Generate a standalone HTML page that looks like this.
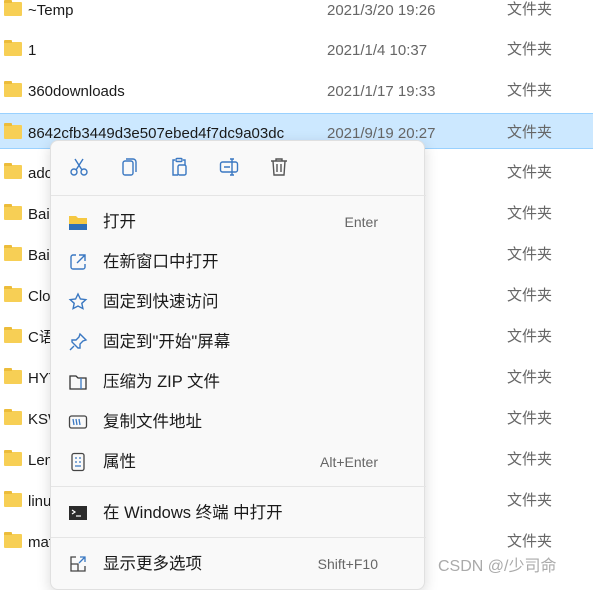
<!DOCTYPE html>
<html><head><meta charset="utf-8"><style>
*{margin:0;padding:0;box-sizing:border-box}
body{width:593px;height:584px;overflow:hidden;background:#fff;position:relative;font-family:"Liberation Sans","Noto Sans CJK SC",sans-serif;color:#1a1a1a;line-height:20px}
.r{position:absolute;left:0;width:593px;height:36px}
.r .f{position:absolute;left:4px;top:11px;width:18px;height:14px;background:#f7cf55;border-radius:1px}
.r .f:before{content:"";position:absolute;left:0;top:-2px;width:8px;height:3px;background:#ecbc3a;border-radius:1px 1px 0 0}
.r .n{position:absolute;left:28px;top:10px;font-size:15px;line-height:20px}
.r .d{position:absolute;left:327px;top:10px;font-size:15px;color:#666;line-height:20px}
.r .t{position:absolute;left:507px;top:9px;font-size:15px;color:#666;line-height:20px}
.sel{background:#cce8ff;border-top:1px solid #99d1ff;border-bottom:1px solid #99d1ff}
.menu{position:absolute;left:50px;top:140px;width:375px;height:450px;background:#f9f9f9;border:1px solid #e0e0e0;border-radius:8px;box-shadow:0 4px 14px rgba(0,0,0,.15)}
.it{position:absolute;left:0;width:375px;height:36px}
.it .l{position:absolute;left:52px;top:8px;font-size:16.5px;line-height:20px}
.it .k{position:absolute;right:48px;top:8px;font-size:14px;color:#666;line-height:20px}
.it svg{position:absolute;left:17px;top:8px}
.sep{position:absolute;left:0;width:375px;height:1px;background:#e5e5e5}
.tb svg{position:absolute;top:16px}
.wm{position:absolute;left:438px;top:557px;font-size:16px;color:#aaa;line-height:20px}
</style></head><body>
<div class="r" style="top:-9px"><div class="f"></div><div class="n">~Temp</div><div class="d">2021/3/20 19:26</div><div class="t">文件夹</div></div>
<div class="r" style="top:31px"><div class="f"></div><div class="n">1</div><div class="d">2021/1/4 10:37</div><div class="t">文件夹</div></div>
<div class="r" style="top:72px"><div class="f"></div><div class="n">360downloads</div><div class="d">2021/1/17 19:33</div><div class="t">文件夹</div></div>
<div class="r sel" style="top:113px"><div class="f"></div><div class="n">8642cfb3449d3e507ebed4f7dc9a03dc</div><div class="d">2021/9/19 20:27</div><div class="t">文件夹</div></div>
<div class="r" style="top:154px"><div class="f"></div><div class="n">adob</div><div class="d">2021/1/1 1:54</div><div class="t">文件夹</div></div>
<div class="r" style="top:195px"><div class="f"></div><div class="n">Baid</div><div class="d">2021/1/1 1:09</div><div class="t">文件夹</div></div>
<div class="r" style="top:236px"><div class="f"></div><div class="n">Baid</div><div class="d">2021/1/1 1:31</div><div class="t">文件夹</div></div>
<div class="r" style="top:277px"><div class="f"></div><div class="n">Clou</div><div class="d">2021/1/1 1:41</div><div class="t">文件夹</div></div>
<div class="r" style="top:318px"><div class="f"></div><div class="n">C语</div><div class="d">2021/1/1 1:11</div><div class="t">文件夹</div></div>
<div class="r" style="top:359px"><div class="f"></div><div class="n">HYT</div><div class="d">2021/1/1 1:55</div><div class="t">文件夹</div></div>
<div class="r" style="top:400px"><div class="f"></div><div class="n">KSW</div><div class="d">2021/1/1 1:58</div><div class="t">文件夹</div></div>
<div class="r" style="top:441px"><div class="f"></div><div class="n">Len</div><div class="d">2021/1/1 1:31</div><div class="t">文件夹</div></div>
<div class="r" style="top:482px"><div class="f"></div><div class="n">linu</div><div class="d">2021/1/1 1:51</div><div class="t">文件夹</div></div>
<div class="r" style="top:523px"><div class="f"></div><div class="n">mat</div><div class="d">2021/1/1 1:07</div><div class="t">文件夹</div></div>
<div class="wm">CSDN @/少司命</div>

<div class="menu">
<div class="tb">
<svg style="left:18px" width="20" height="20" viewBox="0 0 20 20" fill="none" stroke="#3a78c2" stroke-width="1.4"><circle cx="5" cy="15" r="3"/><circle cx="15" cy="15" r="3"/><path d="M7 13L14 2M13 13L6 2"/></svg>
<svg style="left:68px" width="20" height="20" viewBox="0 0 20 20" fill="none" stroke="#3a78c2" stroke-width="1.4"><rect x="4" y="4" width="10" height="14" rx="2"/><path d="M7 2h7a3 3 0 0 1 3 3v10"/></svg>
<svg style="left:118px" width="20" height="20" viewBox="0 0 20 20" fill="none" stroke="#3a78c2" stroke-width="1.4"><path d="M6 3H4v15h5"/><rect x="7" y="1.5" width="6" height="3" rx="1"/><path d="M14 3h2v5"/><rect x="9" y="8" width="8" height="10" rx="1.5"/></svg>
<svg style="left:168px" width="20" height="20" viewBox="0 0 20 20" fill="none" stroke="#3a78c2" stroke-width="1.4"><rect x="1.5" y="5" width="17" height="10" rx="2"/><path d="M13 2v16M11 2h4M11 18h4M5 10h6"/></svg>
<svg style="left:218px" width="20" height="20" viewBox="0 0 20 20" fill="none" stroke="#555" stroke-width="1.4"><path d="M2 4h16M7 4V2h6v2M4 4l1 14h10l1-14M8 7v8M12 7v8"/></svg>
</div>
<div class="sep" style="top:54px"></div>
<div class="it" style="top:63px"><svg width="20" height="20" viewBox="0 0 20 20"><path d="M1 4h7l2 2h9v12H1z" fill="#f5c842"/><rect x="1" y="12" width="18" height="6" fill="#2f6fb8"/></svg><div class="l">打开</div><div class="k">Enter</div></div>
<div class="it" style="top:103px"><svg width="20" height="20" viewBox="0 0 20 20" fill="none" stroke="#3a78c2" stroke-width="1.4"><path d="M8 3H5a2 2 0 0 0-2 2v10a2 2 0 0 0 2 2h10a2 2 0 0 0 2-2v-3M11 3h6v6M17 3l-8 8"/></svg><div class="l">在新窗口中打开</div></div>
<div class="it" style="top:143px"><svg width="20" height="20" viewBox="0 0 20 20" fill="none" stroke="#3a78c2" stroke-width="1.4"><path d="M10 2l2.4 5 5.4.6-4 3.7 1.1 5.3L10 14l-4.9 2.6 1.1-5.3-4-3.7 5.4-.6z"/></svg><div class="l">固定到快速访问</div></div>
<div class="it" style="top:183px"><svg width="20" height="20" viewBox="0 0 20 20" fill="none" stroke="#3a78c2" stroke-width="1.4"><path d="M12 2l6 6-3 1-3 3 0 4-2 0-6-6 0-2 4 0 3-3zM6 14l-4 4"/></svg><div class="l">固定到"开始"屏幕</div></div>
<div class="it" style="top:223px"><svg width="20" height="20" viewBox="0 0 20 20" fill="none" stroke="#333" stroke-width="1.3"><path d="M2 4h6l2 2h8v11H2z"/><path d="M13 6v11" stroke="#3a78c2"/></svg><div class="l">压缩为 ZIP 文件</div></div>
<div class="it" style="top:263px"><svg width="20" height="20" viewBox="0 0 20 20" fill="none" stroke="#3a78c2" stroke-width="1.3"><rect x="1.5" y="4" width="17" height="12" rx="2" stroke="#444"/><path d="M5 7l1 6M8 7l1 6M11 7l1 6"/></svg><div class="l">复制文件地址</div></div>
<div class="it" style="top:303px"><svg width="20" height="20" viewBox="0 0 20 20" fill="none" stroke="#3a78c2" stroke-width="1.3"><rect x="4" y="1.5" width="12" height="17" rx="2" stroke="#444"/><path d="M7 6h2M11 6h2M7 10h2M11 10h2M7 14h6"/></svg><div class="l">属性</div><div class="k">Alt+Enter</div></div>
<div class="sep" style="top:345px"></div>
<div class="it" style="top:354px"><svg width="20" height="20" viewBox="0 0 20 20"><rect x="1" y="3" width="18" height="14" fill="#2b2b2b"/><path d="M4 7l3 2-3 2" stroke="#fff" fill="none" stroke-width="1.2"/><path d="M8 13h5" stroke="#fff" stroke-width="1.2"/></svg><div class="l">在 Windows 终端 中打开</div></div>
<div class="sep" style="top:396px"></div>
<div class="it" style="top:405px"><svg width="20" height="20" viewBox="0 0 20 20" fill="none" stroke="#444" stroke-width="1.3"><path d="M8 3H3v14h14v-5M3 10h7v7"/><path d="M12 3h5v5M17 3l-6 6" stroke="#3a78c2"/></svg><div class="l">显示更多选项</div><div class="k">Shift+F10</div></div>
</div>
</body></html>
